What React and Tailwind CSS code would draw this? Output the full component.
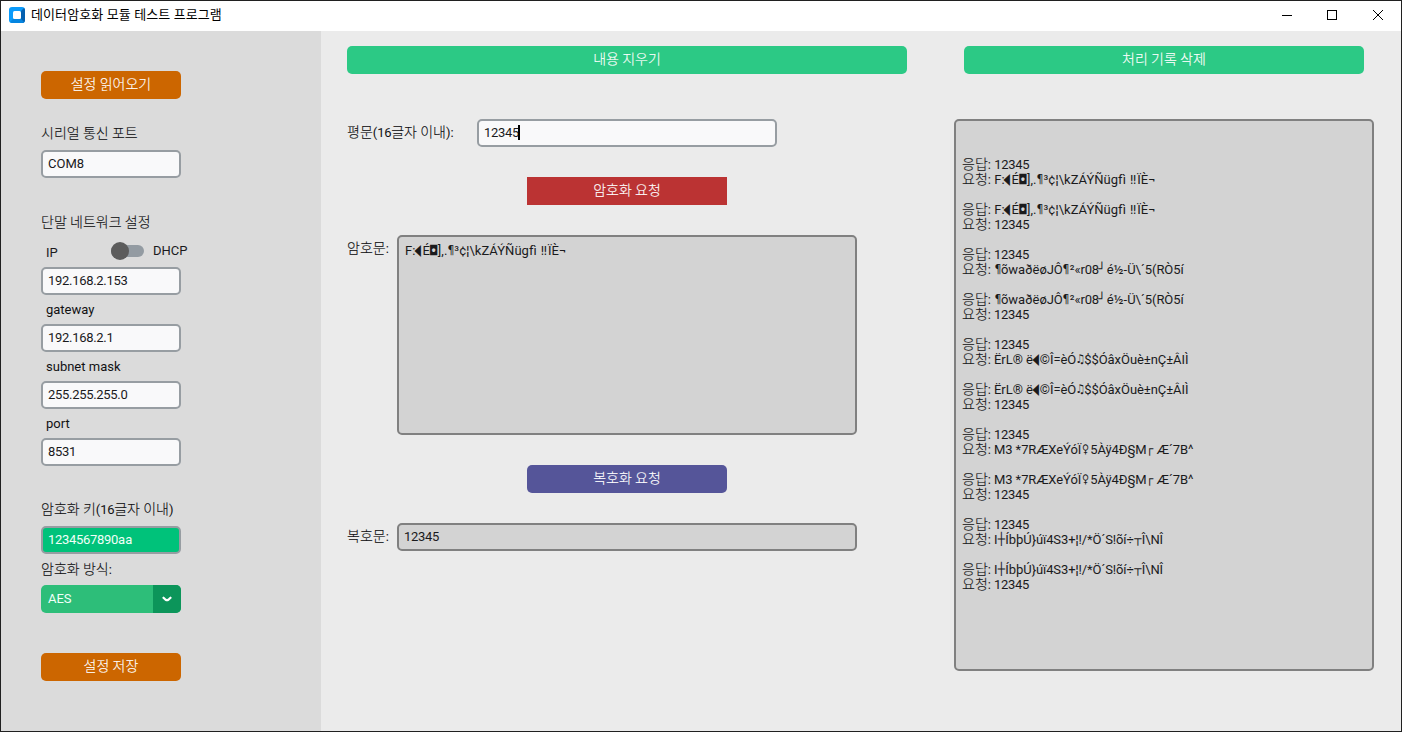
import React from "react";

const FONT = "font-['Roboto','Noto_Sans_CJK_KR',sans-serif]";
const HANGUL = /([\uac00-\ud7a3]+)/;
const SYMBOLS = /([◀◘¶‼♫♀┌┘┼┬]|[0-9.]{2,})/;

/* Substituted glyphs for control characters: advance width and shape. */
const GLYPHS = {
  "◀": ["w-[7px]", "-translate-x-px scale-x-70 scale-y-130"],
  "◘": ["w-[8px]", "translate-y-px scale-y-110"],
  "¶": ["w-[7px]", "scale-x-90"],
  "‼": ["w-[8px]", "translate-y-px"],
  "♫": ["w-[8px]", "scale-x-90"],
  "♀": ["w-[9px]", "scale-x-80"],
  "┌": ["w-[10px]", "-translate-x-[2px]"],
  "┘": ["w-[8px]", "-translate-x-px"],
  "┼": ["w-[8px]", ""],
  "┬": ["w-[8px]", ""],
};

function Symbol({ char }) {
  const [width, shape] = GLYPHS[char];
  return (
    <span className={"inline-flex h-[15px] justify-center align-top font-['DejaVu_Sans'] text-[12px] leading-[15px] tracking-normal " + width}>
      <span className={"inline-block h-[13px] leading-[15px] " + shape}>{char}</span>
    </span>
  );
}

function T({ children }) {
  return children.split(HANGUL).map((part, i) =>
    i % 2 ? (
      <span key={i} className="text-[14px] font-light tracking-normal [-webkit-text-stroke:0.12px_currentColor]">{part}</span>
    ) : (
      part.split(SYMBOLS).map((s, j) => {
        const key = i + "-" + j;
        if (j % 2 === 0) return s;
        if (GLYPHS[s]) return <Symbol key={key} char={s} />;
        return <span key={key} className="tracking-[-0.3px]">{s}</span>;
      })
    )
  );
}

function Button({ className, children }) {
  return (
    <button className={"flex h-7 shrink-0 items-center justify-center pb-[2px] leading-[15px] text-white " + className}>
      <span><T>{children}</T></span>
    </button>
  );
}

function Field({ className = "bg-[#f9f9fa]", children }) {
  return (
    <div className={"flex h-7 w-[140px] shrink-0 items-center rounded-[5px] border-2 border-[#979da2] pb-px pl-[5px] leading-[15px] " + className}>
      <span><T>{children}</T></span>
    </div>
  );
}

function Label({ className, children }) {
  return <div className={"shrink-0 whitespace-pre leading-[15px] text-[#111113] " + className}><T>{children}</T></div>;
}

const A = "F:◀É◘],.¶³¢¦\\kZÁÝÑügfì ‼ÏÈ¬";

const EXCHANGES = [
  { data: A, tracking: "tracking-[0.03px]" },
  { data: "¶õwaðëøJÔ¶²«r08┘é½-Ü\\´5(RÒ5í", tracking: "tracking-[-0.07px]" },
  { data: "ËrL® ë◀©Î=èÓ♫$$ÓâxÖuè±nÇ±ÂIÌ", tracking: "tracking-[-0.06px]" },
  { data: "M3 *7RÆXeÝóÏ♀5Àÿ4Ð§M┌Æ´7B^", tracking: "tracking-[-0.08px]" },
  { data: "I┼ÍbþÚ}úï4S3+¦!/*Ö´S!õí÷┬Î\\NÎ", tracking: "tracking-[-0.11px]" },
];

export default function App() {
  return (
    <div className={"flex h-[732px] w-[1402px] flex-col overflow-hidden border border-[#202020] bg-[#ebebeb] text-[13px] text-[#1a1a1c] " + FONT}>
      <header className="flex h-[30px] shrink-0 items-center bg-white pb-[2px] pl-2">
        <svg width="16" height="16" viewBox="0 0 16 16">
          <rect width="16" height="16" rx="3" fill="#0a9bfb" />
          <path d="M12 4l3-3q1 1 1 2v10q0 3-3 3l-1-4z" fill="#0560b0" />
          <path d="M1 15l3-3h8l3 3q-1 1-2 1H3q-1 0-2-1z" fill="#0585e0" />
          <rect x="4" y="4" width="8" height="8" rx="1.5" fill="#fff" />
        </svg>
        <span className="-mt-px ml-[6px] flex-1 text-[13px] leading-[15px] tracking-[0.1px] text-black">데이터암호화 모듈 테스트 프로그램</span>
        <svg width="112" height="12" viewBox="0 0 112 12" className="mr-[14px] shrink-0" fill="none" stroke="#000" shapeRendering="crispEdges">
          <path d="M7 6.5h10" />
          <rect x="52.5" y="1.5" width="9" height="9" />
          <path d="M98 1l10 10M108 1L98 11" shapeRendering="auto" />
        </svg>
      </header>

      <div className="flex min-h-0 flex-1">
        <aside className="flex w-[320px] shrink-0 flex-col bg-[#dbdbdb] pl-10 pt-10">
          <Button className="w-[140px] rounded-[5px] bg-[#cc6600]">설정 읽어오기</Button>
          <Label className="mt-[27px]">시리얼 통신 포트</Label>
          <div className="mt-[9px]"><Field>COM8</Field></div>
          <Label className="mt-[37px]">단말 네트워크 설정</Label>
          <div className="mt-[12px] flex h-[18px] items-center pl-[5px]">
            <span className="w-[65px] pt-[3px] leading-[15px]">IP</span>
            <span className="flex h-3 w-[33px] items-center rounded-full bg-[#939ba2]">
              <span className="h-[18px] w-[18px] shrink-0 rounded-full bg-[#5c5c5c]" />
            </span>
            <span className="ml-[9px] pb-[2px] leading-[15px]">DHCP</span>
          </div>
          <div className="mt-[7px]"><Field>192.168.2.153</Field></div>
          <Label className="mt-[7px] pl-[5px]">gateway</Label>
          <div className="mt-[7px]"><Field>192.168.2.1</Field></div>
          <Label className="mt-[7px] pl-[5px]">subnet mask</Label>
          <div className="mt-[7px]"><Field>255.255.255.0</Field></div>
          <Label className="mt-[7px] pl-[5px]">port</Label>
          <div className="mt-[7px]"><Field>8531</Field></div>
          <Label className="mt-[36px]">암호화 키(16글자 이내)</Label>
          <div className="mt-[9px]"><Field className="bg-[#00c27a] text-[#f0fff8]">1234567890aa</Field></div>
          <Label className="mt-[8px]">암호화 방식:</Label>
          <div className="mt-[8px] flex h-7 w-[140px] shrink-0 overflow-hidden rounded-[5px] bg-[#2dbe79] text-[#f0fff8]">
            <span className="flex flex-1 items-center pb-px pl-[7px]">AES</span>
            <span className="flex w-7 items-center justify-center bg-[#0c955a]">
              <svg width="10" height="6" viewBox="0 0 10 6" fill="none" stroke="#fff" strokeWidth="2.2" strokeLinecap="round" strokeLinejoin="round">
                <path d="M1.5 1.7L3.6 3.8Q5 4.6 6.4 3.8L8.5 1.7" />
              </svg>
            </span>
          </div>
          <Button className="mt-10 w-[140px] rounded-[5px] bg-[#cc6600]">설정 저장</Button>
        </aside>

        <main className="flex w-[586px] shrink-0 flex-col pl-[26px] pt-[15px]">
          <Button className="w-[560px] rounded-[5px] bg-[#2cc985]">내용 지우기</Button>
          <div className="mt-[45px] flex h-7">
            <Label className="w-[130px] pt-[6px]">평문(16글자 이내):</Label>
            <div className="flex h-7 w-[300px] items-center rounded-[5px] border-2 border-[#979da2] bg-[#f9f9fa] pb-px pl-[5px] leading-[15px]">
              <T>12345</T><span className="-ml-px h-[15px] w-[2px] bg-black" />
            </div>
          </div>
          <Button className="ml-[180px] mt-[30px] w-[200px] bg-[#bb3333]">암호화 요청</Button>
          <div className="mt-[30px] flex h-[200px]">
            <Label className="w-[50px] pt-[6px]">암호문:</Label>
            <div className="w-[460px] whitespace-pre rounded-[5px] border-2 border-[#808080] bg-[#d3d3d3] pl-[6px] pt-[6px] leading-[15px] tracking-[0.03px]"><T>{A}</T></div>
          </div>
          <Button className="ml-[180px] mt-[30px] w-[200px] rounded-[5px] bg-[#555599]">복호화 요청</Button>
          <div className="mt-[30px] flex h-7">
            <Label className="w-[50px] pt-[6px]">복호문:</Label>
            <div className="flex w-[460px] items-center rounded-[5px] border-2 border-[#808080] bg-[#d3d3d3] pb-px pl-[5px] leading-[15px]"><T>12345</T></div>
          </div>
        </main>

        <section className="flex flex-1 flex-col pl-[47px] pt-[15px]">
          <Button className="ml-[10px] w-[400px] rounded-[5px] bg-[#2cc985]">처리 기록 삭제</Button>
          <div className="mt-[45px] flex h-[552px] w-[420px] flex-col gap-[15px] rounded-[5px] border-2 border-[#808080] bg-[#d3d3d3] pl-[6px] pt-[36px]">
            {EXCHANGES.flatMap(({ data, tracking }) => [
              ["응답: 12345", "요청: " + data],
              ["응답: " + data, "요청: 12345"],
            ].map((pair) => (
              <div key={pair[0] + pair[1]} className={"whitespace-pre leading-[15px] " + tracking}>
                <div className="h-[15px]"><T>{pair[0]}</T></div>
                <div className="h-[15px]"><T>{pair[1]}</T></div>
              </div>
            )))}
          </div>
        </section>
      </div>
    </div>
  );
}
